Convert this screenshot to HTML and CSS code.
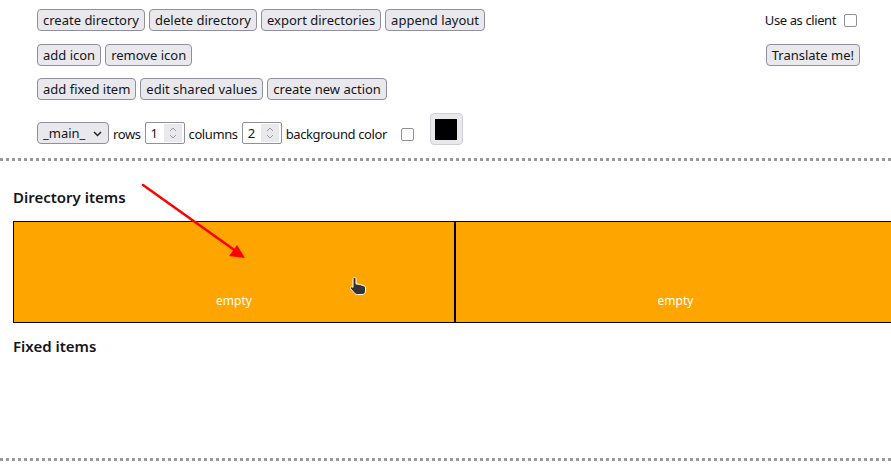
FILE: index.html
```html
<!DOCTYPE html>
<html>
<head>
<meta charset="utf-8">
<link rel="stylesheet" href="styles.css">
</head>
<body>
<div class="top">
  <div class="controls">
    <div class="row">
      <button class="btn">create directory</button>
      <button class="btn">delete directory</button>
      <button class="btn">export directories</button>
      <button class="btn">append layout</button>
    </div>
    <div class="row row-second">
      <button class="btn">add icon</button>
      <button class="btn">remove icon</button>
    </div>
    <div class="row">
      <button class="btn">add fixed item</button>
      <button class="btn">edit shared values</button>
      <button class="btn">create new action</button>
    </div>
    <div class="row row-settings">
      <span class="select">_main_
        <svg class="chev" width="9" height="6" viewBox="0 0 9 6"><path d="M1 1 L4.5 4.5 L8 1" fill="none" stroke="#222" stroke-width="1.5"/></svg>
      </span>
      <span class="lbl">rows</span>
      <span class="num"><span class="num-val">1</span><span class="spin"><svg width="10" height="14" viewBox="0 0 10 14"><path d="M2 5 L5 2 L8 5 M2 9 L5 12 L8 9" fill="none" stroke="#9a9aa2" stroke-width="1"/></svg></span></span>
      <span class="lbl">columns</span>
      <span class="num"><span class="num-val">2</span><span class="spin"><svg width="10" height="14" viewBox="0 0 10 14"><path d="M2 5 L5 2 L8 5 M2 9 L5 12 L8 9" fill="none" stroke="#9a9aa2" stroke-width="1"/></svg></span></span>
      <span class="lbl">background color</span>
      <span class="check check-bg"></span>
      <span class="swatch"><span class="swatch-in"></span></span>
    </div>
  </div>
  <div class="side">
    <div class="client"><span class="lbl">Use as client</span><span class="check"></span></div>
    <button class="btn">Translate me!</button>
  </div>
</div>
<div class="divider"></div>
<div class="section">
  <h3 class="heading">Directory items</h3>
  <div class="grid">
    <div class="cell"><span class="empty">empty</span></div>
    <div class="cell"><span class="empty">empty</span></div>
  </div>
  <h3 class="heading heading-fixed">Fixed items</h3>
</div>
<div class="divider"></div>

<svg class="arrow" width="891" height="469" viewBox="0 0 891 469">
  <line x1="143" y1="185" x2="240" y2="254" stroke="#f00" stroke-width="2.5" stroke-linecap="round"/>
  <path d="M245 258 L229 256 L237 245 Z" fill="#f00"/>
</svg>
<svg class="cursor" width="18" height="20" viewBox="0 0 18 20">
  <path d="M5.5 1.5 C6.5 1.5 7 2 7 3 L7 8 L8 8 C8.8 8 9.5 8.2 10 8.6 C10.6 8.3 11.5 8.4 12 9 C12.6 8.8 13.5 9 14 9.6 C15.2 9.6 16.5 10.3 16.5 12 L16.5 15 C16.5 17 15 18.5 13 18.5 L8.5 18.5 C7 18.5 6 17.8 5.2 16.8 L1.8 13 C1.2 12.3 1.4 11.2 2.2 10.9 C2.9 10.6 3.6 10.9 4 11.4 L4 3 C4 2 4.5 1.5 5.5 1.5 Z" fill="#333" stroke="#fff" stroke-width="1"/>
</svg>
</body>
</html>
```
FILE: styles.css
```css
html, body {
  margin: 0;
  padding: 0;
  overflow: hidden;
  background: #fff;
}
body {
  font-family: "Noto Sans", "DejaVu Sans", sans-serif;
  font-size: 13px;
  color: #15141a;
  width: 891px;
  height: 469px;
  position: relative;
}
.top {
  display: flex;
  justify-content: space-between;
  padding: 9px 31px 0 37px;
  height: 149px;
}
.controls {
  display: flex;
  flex-direction: column;
  gap: 12px;
}
.row {
  display: flex;
  align-items: center;
  gap: 4px;
  height: 22px;
}
.row-second { margin-top: 1px; }
.row-settings {
  height: 32px;
  margin-top: 1px;
  align-items: flex-end;
}
.row-settings > * { margin-bottom: 1px; }
.btn {
  font: inherit;
  color: #15141a;
  background: #e9e9ed;
  border: 1px solid #8f8f9d;
  border-radius: 4px;
  height: 22px;
  padding: 0 5px;
  line-height: 18px;
  margin: 0;
}
.select {
  display: inline-flex;
  align-items: center;
  justify-content: space-between;
  box-sizing: border-box;
  width: 72px;
  height: 22px;
  padding: 0 6px 0 5px;
  background: #e9e9ed;
  border: 1px solid #8f8f9d;
  border-radius: 4px;
}
.chev { margin-top: 1px; }
.lbl {
  white-space: nowrap;
  letter-spacing: -0.4px;
  line-height: 20px;
}
.num {
  display: inline-flex;
  align-items: center;
  box-sizing: border-box;
  width: 40px;
  height: 22px;
  border: 1px solid #8f8f9d;
  border-radius: 2px;
  background: #fff;
  padding: 1px 2px 1px 5px;
}
.num-val { flex: 1; }
.spin {
  display: flex;
  align-items: center;
  justify-content: center;
  width: 18px;
  height: 18px;
  background: #e9e9ed;
}
.check {
  display: inline-block;
  box-sizing: border-box;
  width: 13px;
  height: 13px;
  border: 1.5px solid #8f8f9d;
  border-radius: 2px;
  background: #fff;
}
.row-settings > .check-bg {
  margin-left: 10px;
  margin-bottom: 4px;
}
.row-settings > .swatch {
  margin-left: 12px;
  margin-bottom: 0;
}
.swatch {
  display: inline-flex;
  align-items: center;
  justify-content: center;
  box-sizing: border-box;
  width: 33px;
  height: 32px;
  background: #e9e9ed;
  border: 1px solid #cfcfd8;
  border-radius: 4px;
}
.swatch-in {
  width: 22px;
  height: 21px;
  background: #000;
}
.side {
  display: flex;
  flex-direction: column;
  align-items: flex-end;
  gap: 13px;
}
.client {
  display: flex;
  align-items: center;
  gap: 8px;
  height: 22px;
  margin-right: 3px;
}
.divider {
  height: 0;
  border-top: 3px dotted #999;
  margin: 0;
}
.section {
  padding: 0 0 0 13px;
  height: 297px;
}
.heading {
  font-size: 15px;
  font-weight: 600;
  margin: 0;
  padding-top: 27px;
  line-height: 18px;
  height: 18px;
}
.heading-fixed { padding-top: 14px; }
.grid {
  display: grid;
  grid-template-columns: 1fr 1fr;
  width: 884px;
  box-sizing: border-box;
  border: 1px solid #000;
  margin-top: 15px;
  background: #ffa500;
}
.cell {
  height: 102px;
  border: 1px solid #000;
  display: flex;
  align-items: flex-end;
  justify-content: center;
  box-sizing: border-box;
  padding-bottom: 14px;
  margin-top: -1px;
  margin-bottom: -1px;
}
.cell:first-child { margin-left: -1px; }
.empty {
  color: #fff;
  font-size: 12px;
  line-height: 14px;
}
.arrow {
  position: absolute;
  left: 0;
  top: 0;
  pointer-events: none;
}
.cursor {
  position: absolute;
  left: 349px;
  top: 276px;
}
```
